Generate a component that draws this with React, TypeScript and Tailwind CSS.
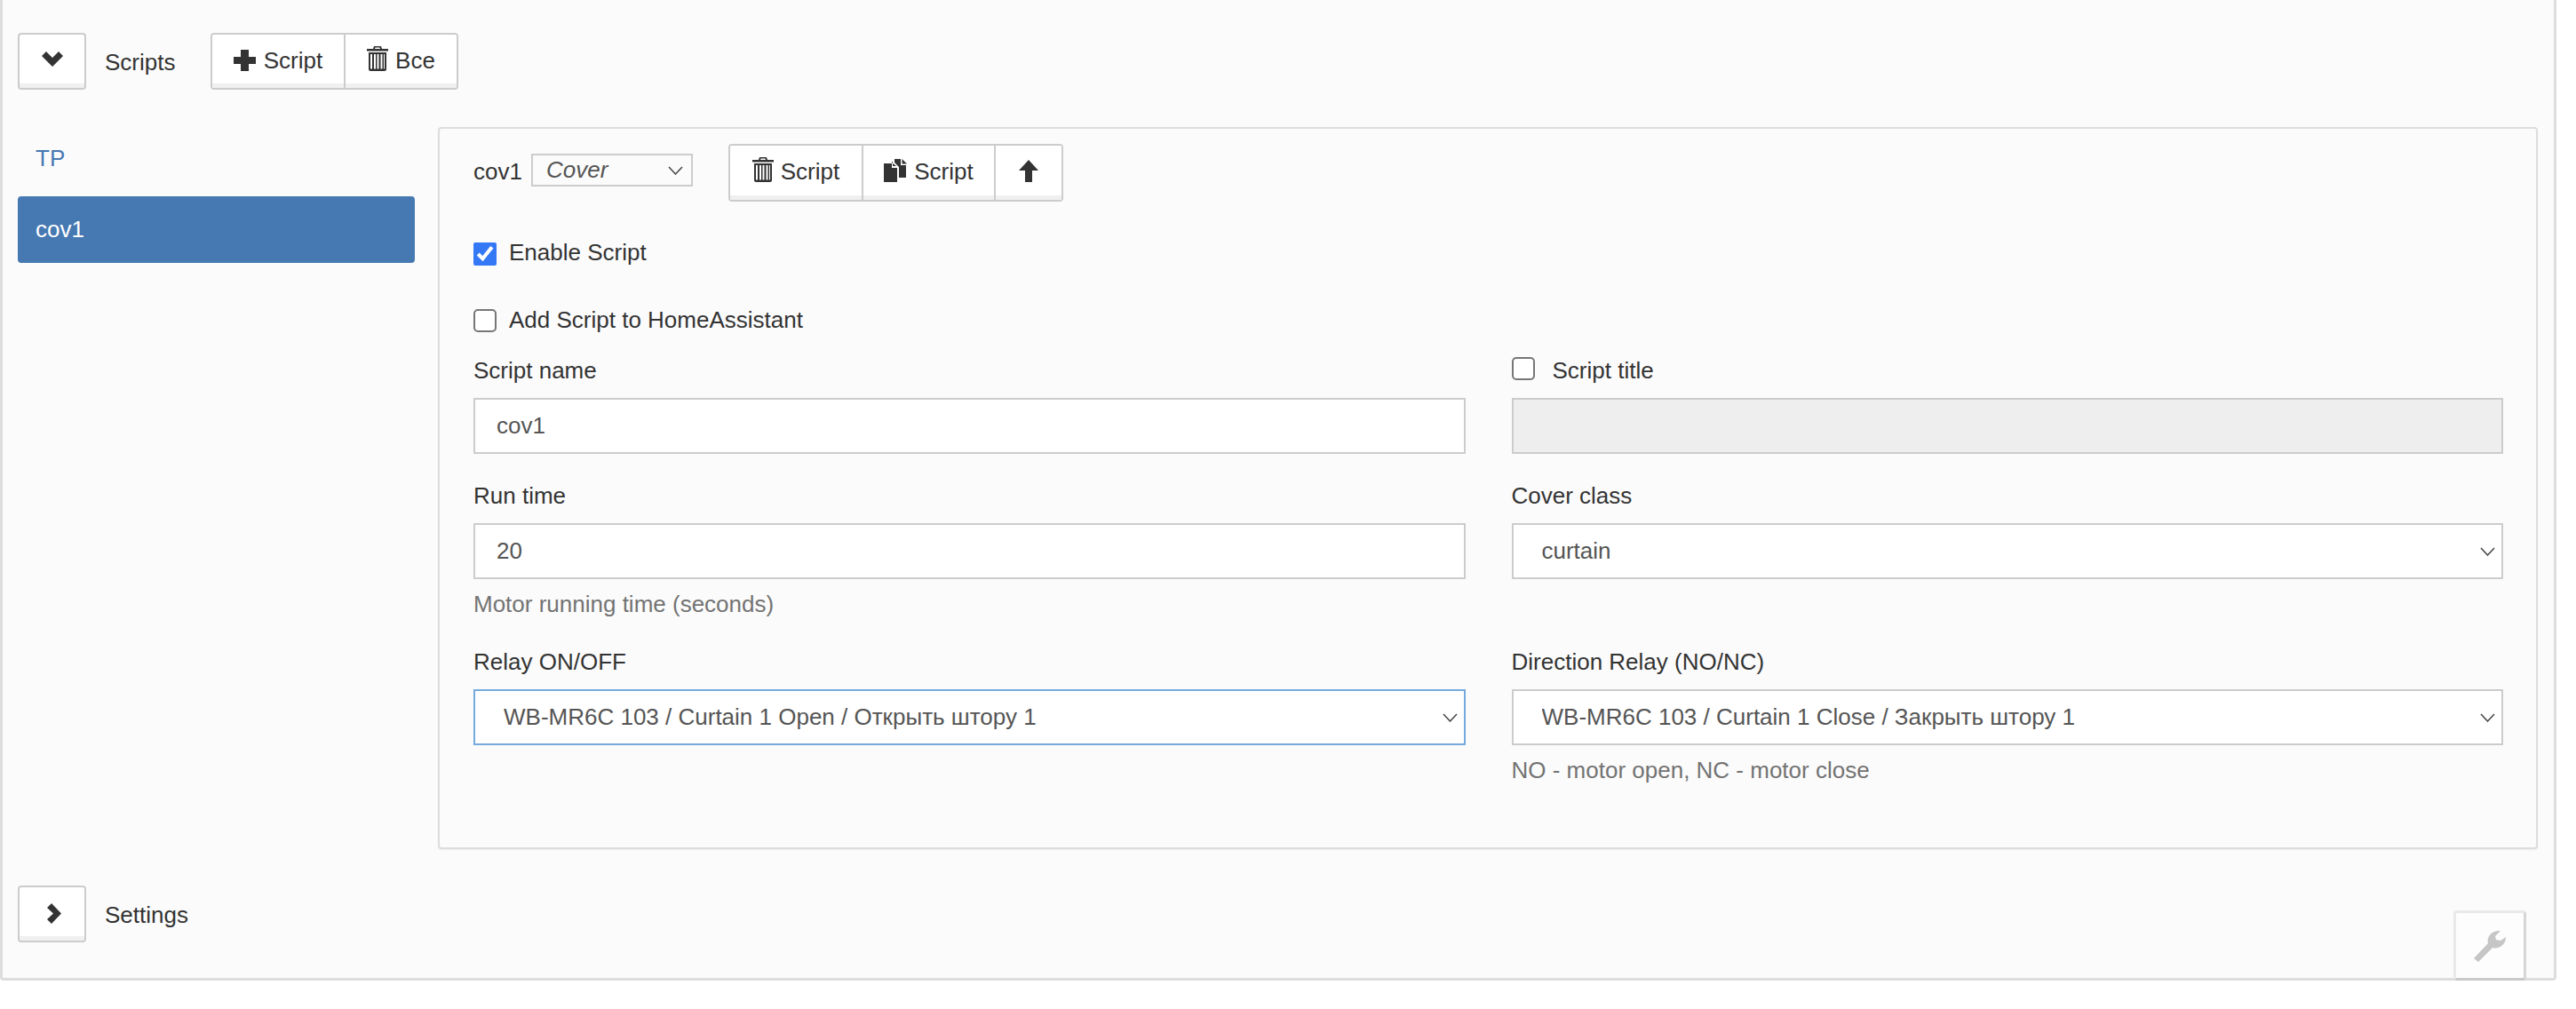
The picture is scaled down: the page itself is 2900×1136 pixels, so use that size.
import {ReactNode} from 'react';
import clsx from 'clsx';

const btn =
  'flex h-full items-center justify-center bg-white text-[26px] text-[#333] shadow-[inset_0_-5px_0_#f0f0f0]';

function ChevronDown() {
  return (
    <svg width="24" height="17" viewBox="0 0 24 17" fill="#333">
      <polygon points="0,5 5,0 12,7 19,0 24,5 12,17" />
    </svg>
  );
}

function ChevronRight() {
  return (
    <svg width="16" height="23" viewBox="0 0 16 23" fill="#333">
      <polygon points="5,0 16,11.5 5,23 0,18 7,11.5 0,5" />
    </svg>
  );
}

function PlusIcon() {
  return (
    <svg width="25" height="24" viewBox="0 0 25 24" fill="#333">
      <polygon points="8,0 17,0 17,8 25,8 25,16 17,16 17,24 8,24 8,16 0,16 0,8 8,8" />
    </svg>
  );
}

function TrashIcon() {
  return (
    <svg className="-mt-[5px]" width="24" height="28" viewBox="0 0 24 28" fill="#333">
      <path d="M8 0h8l1 3h7v2.500H0V3h7zM9.500 1.500 9 3h6l-.5-1.500z" fillRule="evenodd" />
      <path
        d="M2 7h20v19c0 1-1 2-2 2H4c-1 0-2-1-2-2zM4 9v16.500h2V9zm4 0v16.500h2V9zm3.500 0v16.500h2V9zm4 0v16.500h2V9zm3.500 0v16.500h1V9z"
        fillRule="evenodd"
      />
    </svg>
  );
}

function CopyIcon() {
  return (
    <svg className="-mt-[3px]" width="27" height="26" viewBox="0 0 27 26" fill="#333">
      <path d="M0 5h9v5h6v16H0z" />
      <path d="M9 4V3h1v5h4zM12 0h7v7h6v14h-8V9l-5-5z" />
      <path d="M20.500 0 26 5.500h-5.500z" />
    </svg>
  );
}

function ArrowUpIcon() {
  return (
    <svg className="-mt-[3px]" width="22" height="25" viewBox="0 0 22 25" fill="#333">
      <polygon points="11,0 22,12 15,12 15,25 7,25 7,12 0,12" />
    </svg>
  );
}

function WrenchIcon() {
  return (
    <svg width="36" height="36" viewBox="0 0 36 36" fill="#c6c6c6">
      <path d="M0 32 16 15C14 8 20 0 30 1L24 7l1 4 5 1 6-4c0 9-8 14-15 12L5 36z" />
    </svg>
  );
}

function SelectChevron() {
  return (
    <svg
      className="pointer-events-none absolute top-1/2 right-[9px] -translate-y-1/2"
      width="17"
      height="10"
      viewBox="0 0 17 10"
      fill="none"
      stroke="#444"
      strokeWidth="1.500"
    >
      <path d="M1 1l7.500 8L16 1" />
    </svg>
  );
}

function Field({label, children, help}: {label: ReactNode; children: ReactNode; help?: string}) {
  return (
    <div className="min-w-0">
      <div className="flex h-[30px] items-center text-[26px] text-[#333]">{label}</div>
      <div className="mt-[16px]">{children}</div>
      {help && (
        <div className="mt-[13px] flex h-[30px] items-center text-[26px] text-[#737373]">{help}</div>
      )}
    </div>
  );
}

function TextInput({value}: {value: string}) {
  return (
    <input
      readOnly
      value={value}
      className="block h-[63px] w-full border-2 border-[#ccc] bg-white px-[24px] pb-[1px] text-[26px] text-[#555] outline-none"
    />
  );
}

function SelectInput({value, focused}: {value: string; focused?: boolean}) {
  return (
    <div className="relative">
      <select
        defaultValue={value}
        className={clsx(
          'block h-[63px] w-full appearance-none border-2 bg-white pl-[32px] text-[26px] text-[#555] outline-none',
          focused ? 'border-[#75aade]' : 'border-[#ccc]'
        )}
      >
        <option>{value}</option>
      </select>
      <SelectChevron />
    </div>
  );
}

function Check({checked}: {checked?: boolean}) {
  return (
    <input
      type="checkbox"
      readOnly
      checked={!!checked}
      className={clsx(
        'm-0 h-[26px] w-[26px] shrink-0',
        checked
          ? 'accent-[#3478f6]'
          : 'appearance-none rounded-[5px] border-2 border-[#767676] bg-white'
      )}
    />
  );
}

export default function App() {
  return (
    <div className="h-[1136px] w-[2900px] bg-white font-['Liberation_Sans',Arial,sans-serif]">
      <div className="relative flex h-[1104px] w-[2878px] flex-col rounded-b-[4px] border-x-[3px] border-b-[3px] border-[#ddd] bg-[#fbfbfb] pt-[37px] pl-[17px]">
        <div className="flex h-[64px] items-center">
          <button className={clsx(btn, 'w-[77px] rounded-[4px] border-2 border-[#ccc] pb-[5px]')}>
            <ChevronDown />
          </button>
          <span className="ml-[21px] w-[119px] pt-[2px] text-[26px] text-[#333]">Scripts</span>
          <div className="flex h-full w-[279px] overflow-hidden rounded-[4px] border-2 border-[#ccc]">
            <button className={clsx(btn, 'w-[150px] gap-[9px] border-r-2 border-[#ccc] pb-[2px]')}>
              <PlusIcon />
              Script
            </button>
            <button className={clsx(btn, 'flex-1 gap-[8px] pb-[2px]')}>
              <TrashIcon />
              Все
            </button>
          </div>
        </div>

        <div className="mt-[42px] flex items-start">
          <div className="w-[447px] shrink-0">
            <div className="flex h-[78px] items-center pb-[7px] pl-[20px] text-[26px] text-[#4679b2]">TP</div>
            <div className="flex h-[75px] items-center rounded-[4px] bg-[#4679b2] pb-[1px] pl-[20px] text-[26px] text-white">
              cov1
            </div>
          </div>
          <div className="ml-[26px] h-[813px] w-[2364px] shrink-0 rounded-[4px] border-2 border-[#ddd] bg-[#fbfbfb] pt-[17px] pr-[37px] pl-[38px] shadow-[0_1px_2px_rgba(0,0,0,0.06)]">
            <div className="flex h-[65px] items-center">
              <span className="w-[65px] pb-[2px] text-[26px] text-[#333]">cov1</span>
              <div className="relative mb-[6px] flex h-[37px] w-[182px] items-center border-2 border-[#ccc] pb-[1px] pl-[15px] text-[26px] text-[#555] italic">
                Cover
                <SelectChevron />
              </div>
              <div className="ml-[40px] flex h-full w-[377px] overflow-hidden rounded-[4px] border-2 border-[#ccc]">
                <button className={clsx(btn, 'w-[150px] gap-[8px] border-r-2 border-[#ccc] pb-[2px]')}>
                  <TrashIcon />
                  Script
                </button>
                <button className={clsx(btn, 'w-[149px] gap-[7px] border-r-2 border-[#ccc] pb-[2px]')}>
                  <CopyIcon />
                  Script
                </button>
                <button className={clsx(btn, 'flex-1 pb-[2px]')}>
                  <ArrowUpIcon />
                </button>
              </div>
            </div>

            <label className="mt-[42px] flex h-[30px] items-center gap-[14px] text-[26px] text-[#333]">
              <span className="mt-[3px] flex">
                <Check checked />
              </span>
              Enable Script
            </label>
            <label className="mt-[46px] flex h-[30px] items-center gap-[14px] text-[26px] text-[#333]">
              <span className="mt-[2px] flex">
                <Check />
              </span>
              Add Script to HomeAssistant
            </label>

            <div className="mt-[27px] grid grid-cols-2 gap-x-[52px] gap-y-[32px]">
              <Field label="Script name">
                <TextInput value="cov1" />
              </Field>
              <Field
                label={
                  <span className="flex items-center gap-[20px]">
                    <span className="-mt-[5px] flex">
                      <Check />
                    </span>
                    Script title
                  </span>
                }
              >
                <div className="h-[63px] border-2 border-[#ccc] bg-[#eee]" />
              </Field>
              <Field label="Run time" help="Motor running time (seconds)">
                <TextInput value="20" />
              </Field>
              <Field label="Cover class">
                <SelectInput value="curtain" />
              </Field>
              <div className="mt-[3px]">
                <Field label="Relay ON/OFF">
                  <SelectInput value="WB-MR6C 103 / Curtain 1 Open / Открыть штору 1" focused />
                </Field>
              </div>
              <div className="mt-[3px]">
                <Field label="Direction Relay (NO/NC)" help="NO - motor open, NC - motor close">
                  <SelectInput value="WB-MR6C 103 / Curtain 1 Close / Закрыть штору 1" />
                </Field>
              </div>
            </div>
          </div>
        </div>

        <div className="mt-[41px] flex h-[64px] items-center">
          <button className={clsx(btn, 'w-[77px] rounded-[4px] border-2 border-[#ccc] pb-[2px] pl-[5px]')}>
            <ChevronRight />
          </button>
          <span className="ml-[21px] pt-[2px] text-[26px] text-[#333]">Settings</span>
        </div>

        <button className="absolute right-[31px] bottom-[-3px] flex h-[79px] w-[82px] items-center justify-center rounded-[4px] border-[3px] border-[#e9e9e9] border-r-[#d6d6d6] border-b-[#c9c9c9] bg-[#fdfdfd]">
          <WrenchIcon />
        </button>
      </div>
    </div>
  );
}
